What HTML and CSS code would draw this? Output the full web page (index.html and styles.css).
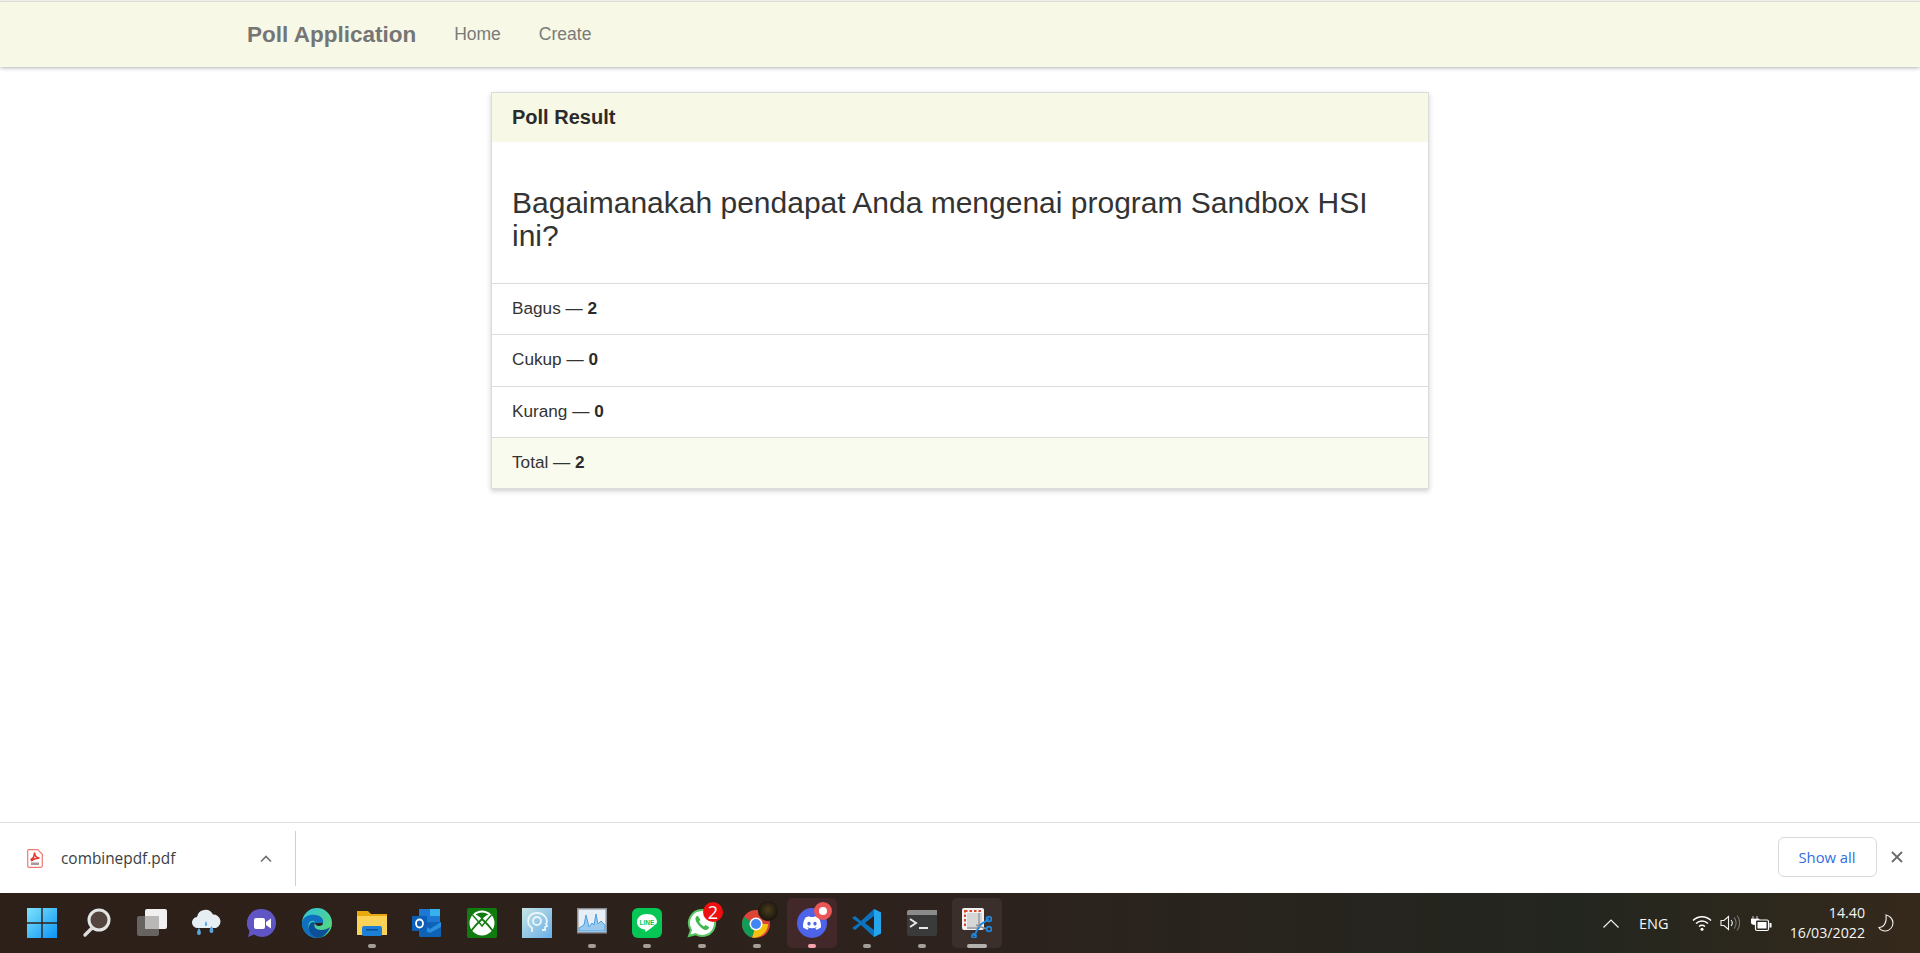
FILE: index.html
```html
<!DOCTYPE html>
<html lang="en">
<head>
  <meta charset="UTF-8" />
  <meta name="viewport" content="width=device-width, initial-scale=1.0"/>
  <title>Poll Application</title>
  <link rel="stylesheet" href="styles.css">
</head>

<body>
  <div class="page">
    <!-- Navbar -->
    <nav class="navbar">
      <a href="#" class="brand">Poll Application</a>
      <a href="#" class="nav-link">Home</a>
      <a href="#" class="nav-link">Create</a>
    </nav>

    <!-- Poll result -->
    <main class="main-content">
      <div class="card">
        <div class="card-header">Poll Result</div>
        <div class="card-body">
          <h2>Bagaimanakah pendapat Anda mengenai program Sandbox HSI ini?</h2>
        </div>
        <ul class="result-list">
          <li>Bagus — <b>2</b></li>
          <li>Cukup — <b>0</b></li>
          <li>Kurang — <b>0</b></li>
          <li class="total">Total — <b>2</b></li>
        </ul>
      </div>
    </main>
  </div>

  <!-- Chrome download shelf -->
  <div class="download-bar">
    <div class="download-item">
      <svg class="pdf-icon" viewBox="0 0 16 19" width="16" height="19">
        <path d="M.7 1.700a1 1 0 0 1 1-1h9l4.600 4.600v11.500a1.500 1.500 0 0 1-1.500 1.500H1.700a1 1 0 0 1-1-1z" fill="#fff" stroke="#f07a72" stroke-width="1.200"/>
        <path d="M3.500 10.500c2-.5 4-3 4-7 .3 3 2 5.500 5 5.500-3 0-6 1-8.500 3" fill="none" stroke="#e5352b" stroke-width="1.600"/>
        <rect x="4" y="13.500" width="8" height="2.500" fill="#a39797"/>
      </svg>
      <span class="file-name">combinepdf.pdf</span>
      <svg class="chevron" viewBox="0 0 12 8" width="12" height="8"><path d="M1 6.500 6 1.500l5 5" fill="none" stroke="#6f6f6f" stroke-width="1.600"/></svg>
    </div>
    <div class="download-actions">
      <button class="show-all">Show all</button>
      <svg class="close-icon" viewBox="0 0 12 12" width="12" height="12"><path d="M1 1l10 10M11 1 1 11" stroke="#6b6b6b" stroke-width="1.800"/></svg>
    </div>
  </div>

  <!-- Windows taskbar -->
  <footer class="taskbar">
    <div class="task-icons">
      <div class="task-item">
        <svg viewBox="0 0 30 30">
          <defs>
            <linearGradient id="winGrad" x1="0" y1="0" x2="1" y2="1"><stop offset="0" stop-color="#7fe3fb"/><stop offset="1" stop-color="#0a94f5"/></linearGradient>
          </defs>
          <path d="M0 0h14.300v14.300H0zM15.700 0H30v14.300H15.700zM0 15.700h14.300V30H0zM15.700 15.700H30V30H15.700z" fill="url(#winGrad)"/>
        </svg>
      </div>
      <div class="task-item">
        <svg viewBox="0 0 30 30">
          <circle cx="17" cy="12" r="10" fill="#54453f" stroke="#e4e4e4" stroke-width="3"/>
          <path d="M10 20 3 27" stroke="#dcdcdc" stroke-width="3.400" stroke-linecap="round"/>
        </svg>
      </div>
      <div class="task-item">
        <svg viewBox="0 0 30 30">
          <rect x="8" y="1" width="22" height="20" rx="2" fill="#f0f0f0"/>
          <rect x="0" y="8" width="22" height="20" rx="2" fill="#6d6a68" fill-opacity=".9"/>
          <rect x="8" y="8" width="14" height="13" fill="#b9b8b7"/>
        </svg>
      </div>
      <div class="task-item">
        <svg viewBox="0 0 30 30">
          <path d="M6 20a5.500 5.500 0 0 1-1-11 8.500 8.500 0 0 1 16-2.500 7 7 0 0 1 3 13.500z" fill="#e6edf3"/>
          <path d="M7 20c-2.500 3.500-2.500 7 0 7s2.500-3.500 0-7zM19.500 18c-2.500 3.500-2.500 7 0 7s2.500-3.500 0-7zM14 13c-1.500 2.500-1.500 5 0 5s1.500-2.500 0-5z" fill="#5ba7e0"/>
        </svg>
      </div>
      <div class="task-item">
        <svg viewBox="0 0 30 30">
          <path d="M15 1a14 14 0 1 1-8 25.500L1 29l1.500-6A14 14 0 0 1 15 1z" fill="#5f55c4"/>
          <rect x="7" y="10" width="11" height="11" rx="2" fill="#fff"/>
          <path d="M19 14l5-3.500v10L19 17z" fill="#fff"/>
        </svg>
      </div>
      <div class="task-item">
        <svg viewBox="0 0 30 30">
          <defs>
            <linearGradient id="edgeGrad" x1="0" y1="0" x2="1" y2="1"><stop offset="0" stop-color="#2fc3e0"/><stop offset="1" stop-color="#5edb6a"/></linearGradient>
          </defs>
          <circle cx="15" cy="15" r="15" fill="url(#edgeGrad)"/>
          <path d="M0 15C1 8 8 6 14 7c6 1 8 5 7 8h-8c0-3-4-3-6 0-2 4 1 11 8 15C6 30 0 23 0 15z" fill="#0f6fc0"/>
          <path d="M13 15c-2 4 1 7 6 7 3 0 7-1 9-3-2 6-7 11-13 11-6-2-9-8-8-12 1-4 5-5 6-3z" fill="#0c4f98"/>
          <path d="M13 15h8c0 2-2 3-4 3s-4-1-4-3z" fill="#2d2019"/>
        </svg>
      </div>
      <div class="task-item running">
        <svg viewBox="0 0 30 30">
          <path d="M0 3h11l3 3h16v21H0z" fill="#e8a90f"/>
          <path d="M0 8h30v19H0z" fill="#fbd258"/>
          <rect x="5" y="18" width="20" height="10" rx="2" fill="#1b80d6"/>
          <rect x="9" y="21" width="12" height="1.500" fill="#0c4e8f"/>
        </svg>
      </div>
      <div class="task-item">
        <svg viewBox="0 0 30 30">
          <path d="M7 1h21v13H7z" fill="#1d78d4"/>
          <path d="M18 1h10v7H18z" fill="#37b0ee"/>
          <path d="M7 14h22v14a1 1 0 0 1-1 1H8a1 1 0 0 1-1-1z" fill="#0f62b4"/>
          <path d="M7 14l11 7 11-7v5l-11 6-11-5z" fill="#2a8fe0"/>
          <rect x="0" y="8" width="15" height="15" rx="1" fill="#0a5fb8"/>
          <ellipse cx="7.500" cy="15.500" rx="3.500" ry="4" fill="none" stroke="#fff" stroke-width="1.800"/>
        </svg>
      </div>
      <div class="task-item">
        <svg viewBox="0 0 30 30">
          <rect width="30" height="30" rx="2" fill="#107c10"/>
          <circle cx="15" cy="15" r="12.500" fill="#fff"/>
          <path d="M15 11.500C13 9 11 7.500 8.500 6.500a12 12 0 0 1 13 0C19 7.500 17 9 15 11.500z" fill="#107c10"/>
          <path d="M5.500 7c3 3.500 6 6.500 9.500 11 3.500-4.500 6.500-7.500 9.500-11" fill="none" stroke="#107c10" stroke-width="1.400"/>
          <path d="M4 23c3-4 6-7.500 11-12 5 4.500 8 8 11 12" fill="none" stroke="#107c10" stroke-width="1.800"/>
        </svg>
      </div>
      <div class="task-item">
        <svg viewBox="0 0 30 30">
          <defs>
            <linearGradient id="headGrad" x1="0" y1="0" x2="1" y2="1"><stop offset="0" stop-color="#c5e5e4"/><stop offset="1" stop-color="#69aee8"/></linearGradient>
          </defs>
          <rect width="30" height="30" fill="url(#headGrad)"/>
          <path d="M10 24v-4c-7-5-4-15 5-15s11 8 9 11l1 2-2 1v3h-3" fill="none" stroke="#eaf6fb" stroke-width="1.800"/>
          <circle cx="15" cy="13" r="4" fill="none" stroke="#eaf6fb" stroke-width="1.800"/>
        </svg>
      </div>
      <div class="task-item running">
        <svg viewBox="0 0 30 30">
          <rect x=".75" y=".75" width="28.500" height="24" fill="#e8eef6" stroke="#8b8f96" stroke-width="1.500"/>
          <path d="M2 20l5-3 2-10 3 12 3-4 2 2 2-11 2 10 3-3 4 4v6H2z" fill="#9cc9ee" stroke="#4ba0e2"/>
        </svg>
      </div>
      <div class="task-item running">
        <svg viewBox="0 0 30 30">
          <rect width="30" height="30" rx="6" fill="#06c755"/>
          <path d="M15 6c-6 0-10 3.500-10 8 0 4 3 7 8 7.500.6.200 0 2 .3 2.300.5.300 6-3.500 8-5.500 2-1.800 3.700-2.500 3.700-4.300 0-4.500-4-8-10-8z" fill="#fff"/>
          <text x="15" y="16.500" text-anchor="middle" class="line-text">LINE</text>
        </svg>
      </div>
      <div class="task-item running">
        <svg viewBox="0 0 30 30">
          <path d="M15 2a13 13 0 0 0-11 20L2 28l6.500-1.800A13 13 0 1 0 15 2z" fill="#fff" stroke="#58c763" stroke-width="2"/>
          <path d="M10 8c-2 1-2 4 0 7s5 6 8 7c2 .500 4-1 4-3l-3.500-2-1.500 1.500c-2-1-4-3-5-5l1.500-1.500L11 8z" fill="#3fb94e"/>
        </svg>
        <span class="badge badge-count">2</span>
      </div>
      <div class="task-item running">
        <svg viewBox="0 0 30 30">
          <circle cx="14" cy="16" r="14" fill="#db4437"/>
          <path d="M14 16 26 16A14 14 0 0 1 10 29.500z" fill="#f4c20d"/>
          <path d="M14 16 10 29.500A14 14 0 0 1 2 9z" fill="#0f9d58"/>
          <circle cx="14" cy="16" r="6.500" fill="#fff"/>
          <circle cx="14" cy="16" r="5" fill="#4285f4"/>
        </svg>
        <span class="badge badge-avatar"></span>
      </div>
      <div class="task-item running active-alert">
        <svg viewBox="0 0 30 30">
          <circle cx="15" cy="15" r="15" fill="#4d63e8"/>
          <g transform="translate(6 6) scale(.75)">
            <path d="M20.317 4.37a19.791 19.791 0 0 0-4.885-1.515.074.074 0 0 0-.079.037c-.21.375-.444.864-.608 1.250a18.270 18.270 0 0 0-5.487 0 12.640 12.640 0 0 0-.617-1.250.077.077 0 0 0-.079-.037A19.736 19.736 0 0 0 3.677 4.370a.07.07 0 0 0-.032.027C.533 9.046-.32 13.580.099 18.057a.082.082 0 0 0 .031.057 19.900 19.900 0 0 0 5.993 3.030.078.078 0 0 0 .084-.028 14.090 14.090 0 0 0 1.226-1.994.076.076 0 0 0-.041-.106 13.107 13.107 0 0 1-1.872-.892.077.077 0 0 1-.008-.128 10.200 10.200 0 0 0 .372-.292.074.074 0 0 1 .077-.01c3.928 1.793 8.180 1.793 12.062 0a.074.074 0 0 1 .078.01c.12.098.246.198.373.292a.077.077 0 0 1-.006.127 12.299 12.299 0 0 1-1.873.892.077.077 0 0 0-.041.107c.36.698.772 1.362 1.225 1.993a.076.076 0 0 0 .084.028 19.839 19.839 0 0 0 6.002-3.030.077.077 0 0 0 .032-.054c.5-5.177-.838-9.674-3.549-13.660a.061.061 0 0 0-.031-.03zM8.020 15.330c-1.183 0-2.157-1.085-2.157-2.419 0-1.333.956-2.419 2.157-2.419 1.210 0 2.176 1.095 2.157 2.420 0 1.333-.956 2.418-2.157 2.418zm7.975 0c-1.183 0-2.157-1.085-2.157-2.419 0-1.333.955-2.419 2.157-2.419 1.210 0 2.176 1.095 2.157 2.420 0 1.333-.946 2.418-2.157 2.418z" fill="#fff"/>
          </g>
        </svg>
        <span class="badge badge-alert"></span>
      </div>
      <div class="task-item running">
        <svg viewBox="0 0 30 30">
          <path d="M22 1 29 4.500v21L22 29 9 17l-6 5-3-2 7-5-7-5 3-2 6 5z" fill="#0c72bd"/>
          <path d="M22 1 29 4.500v21L22 29z" fill="#24a5ee"/>
          <path d="M22 8v14l-9-7z" fill="#2d2019"/>
        </svg>
      </div>
      <div class="task-item running">
        <svg viewBox="0 0 30 30">
          <rect y="2" width="30" height="26" rx="2" fill="#3a3a3a"/>
          <path d="M0 4a2 2 0 0 1 2-2h28v5H0z" fill="#8b8b8b"/>
          <path d="M3 11l6 4-6 4" fill="none" stroke="#e8e8e8" stroke-width="2"/>
          <rect x="12" y="19" width="9" height="2" fill="#e8e8e8"/>
        </svg>
      </div>
      <div class="task-item task-active">
        <svg viewBox="0 0 30 30">
          <rect width="22" height="22" rx="2" fill="#f1f1f1"/>
          <rect x="3" y="3" width="15" height="15" fill="none" stroke="#d8492e" stroke-width="2" stroke-dasharray="2.500 2"/>
          <rect x="5" y="5" width="15" height="15" fill="#d6d6d6"/>
          <path d="M17 5v15H5" fill="none" stroke="#a9a9a9" stroke-width="2"/>
          <path d="M12 28l6-11 9-6" fill="none" stroke="#1f86dd" stroke-width="1.800"/>
          <path d="M14 17l5 2 6 2" fill="none" stroke="#8a8f94" stroke-width="1.500"/>
          <circle cx="27" cy="11" r="2.400" fill="none" stroke="#1f86dd" stroke-width="1.800"/>
          <circle cx="27" cy="21" r="2.400" fill="none" stroke="#1f86dd" stroke-width="1.800"/>
          <circle cx="12" cy="28" r="2" fill="none" stroke="#1f86dd" stroke-width="1.800"/>
        </svg>
      </div>
    </div>

    <div class="tray">
      <svg class="tray-chevron" viewBox="0 0 16 9" width="16" height="9"><path d="M.5 8.500 8 1l7.500 7.500" fill="none" stroke="#f2f2f2" stroke-width="1.200"/></svg>
      <span class="tray-lang">ENG</span>
      <svg class="tray-wifi" viewBox="0 0 20 16" width="20" height="16">
        <path d="M1 5.500c5-5 13-5 18 0M4 8.500c3.500-3.200 8.500-3.200 12 0M7 11.500c1.800-1.500 4.200-1.500 6 0" fill="none" stroke="#fff" stroke-width="1.500"/>
        <circle cx="10" cy="14.300" r="1.500" fill="#fff"/>
      </svg>
      <svg class="tray-sound" viewBox="0 0 20 18" width="20" height="18">
        <path d="M1 6.500h3l4.500-4v13L4 11.500H1z" fill="none" stroke="#f2f2f2" stroke-width="1.100"/>
        <path d="M11 6c1.500 1.700 1.500 4.300 0 6" fill="none" stroke="#f2f2f2" stroke-width="1.100"/>
        <path d="M14 3.500c2.800 3 2.800 8 0 11M17 1.500c3.500 4 3.500 11 0 15" fill="none" stroke="#77756f" stroke-width="1.100"/>
      </svg>
      <svg class="tray-battery" viewBox="0 0 21 17" width="21" height="17">
        <path d="M2 1v3M6 1v3M0 4h8v2.500a3 3 0 0 1-3 3H3a3 3 0 0 1-3-3z" fill="#fff" stroke="#fff" stroke-width=".8"/>
        <rect x="4.500" y="5" width="13" height="10.500" rx="1.500" fill="#2a2620" stroke="#fff" stroke-width="1.200"/>
        <rect x="6.500" y="7" width="9" height="6.500" fill="#fff"/>
        <rect x="18.500" y="8" width="2" height="4.500" fill="#fff"/>
      </svg>
      <div class="clock">
        <span>14.40</span>
        <span>16/03/2022</span>
      </div>
      <svg class="tray-moon" viewBox="0 0 16 18" width="16" height="18"><path d="M8 1c3 .5 7 3.500 7 8 0 4-3.500 8-7.500 8-3 0-5.500-1.500-6.500-3.500 4 .5 8-4 7-12.500z" fill="none" stroke="#f2f2f2" stroke-width="1.100"/></svg>
    </div>
  </footer>
</body>
</html>
```

FILE: styles.css
```css
* {
  margin: 0;
  padding: 0;
  box-sizing: border-box;
}

html, body {
  height: 100%;
  overflow: hidden;
}

body {
  font-family: 'Liberation Sans', Arial, sans-serif;
  background-color: #fff;
  color: #333;
  display: flex;
  flex-direction: column;
}

.page {
  flex: 1;
  min-height: 0;
}

/* Navbar */

.navbar {
  display: flex;
  align-items: center;
  height: 66px;
  margin-top: 1px;
  padding-left: 247px;
  background-color: #f7f8e5;
  border-top: 1px solid #dcdcd0;
  box-shadow: 0 1px 4px rgba(0, 0, 0, 0.3);
}

.brand {
  font-size: 22.5px;
  font-weight: bold;
  color: #757575;
  text-decoration: none;
  margin-right: 38px;
}

.nav-link {
  font-size: 17.5px;
  color: #7a7a7a;
  text-decoration: none;
  margin-right: 38px;
}

/* Card */

.main-content {
  width: 938px;
  margin: 25px 0 0 491px;
}

.card {
  background-color: #fff;
  border: 1px solid #dcdcdc;
  box-shadow: 0 2px 5px rgba(0, 0, 0, 0.2);
}

.card-header {
  height: 49px;
  line-height: 49px;
  padding-left: 20px;
  font-size: 20px;
  font-weight: bold;
  color: #2b2b2b;
  background-color: #f7f8e5;
}

.card-body {
  height: 141px;
  padding: 44px 20px 0;
}

.card-body h2 {
  font-size: 30px;
  font-weight: normal;
  line-height: 33px;
  color: #333;
}

.result-list {
  list-style: none;
}

.result-list li {
  height: 51.250px;
  line-height: 49px;
  padding-left: 20px;
  font-size: 17.200px;
  border-top: 1px solid #dcdcdc;
}

.result-list b {
  color: #2b2b2b;
}

.result-list .total {
  background-color: #fafbef;
}

/* Download shelf */

.download-bar {
  display: flex;
  justify-content: space-between;
  flex-shrink: 0;
  height: 71px;
  background-color: #fff;
  border-top: 1px solid #e2e2e2;
  font-family: 'Open Sans', sans-serif;
}

.download-item {
  display: flex;
  align-items: center;
  width: 296px;
  height: 55px;
  margin-top: 8px;
  padding-left: 27px;
  border-right: 1px solid #cfcfcf;
}

.pdf-icon {
  margin-right: 18px;
}

.file-name {
  font-size: 15.400px;
  color: #3c4043;
  width: 199px;
}

.download-actions {
  display: flex;
  align-items: center;
  height: 40px;
  margin-top: 14px;
}

.show-all {
  width: 99px;
  height: 40px;
  font-family: 'Open Sans', sans-serif;
  font-size: 14.800px;
  color: #2f6fe0;
  background-color: #fff;
  border: 1px solid #d9d9d9;
  border-radius: 6px;
}

.close-icon {
  margin: 0 17px 0 14.500px;
}

/* Taskbar */

.taskbar {
  display: flex;
  justify-content: space-between;
  flex-shrink: 0;
  height: 60px;
  background: linear-gradient(90deg, #2d2019 0%, #2d221d 50%, #23261f 82%, #35291b 100%);
  font-family: 'Open Sans', sans-serif;
  color: #f5f5f5;
}

.task-icons {
  display: flex;
  padding-left: 14px;
}

.task-item {
  position: relative;
  display: flex;
  align-items: center;
  justify-content: center;
  width: 55px;
  height: 60px;
}

.task-item svg {
  width: 30px;
  height: 30px;
}

.running::after,
.task-active::after {
  content: "";
  position: absolute;
  bottom: 5px;
  left: 23.500px;
  width: 8px;
  height: 4px;
  border-radius: 2px;
  background-color: #a39e9a;
}

.active-alert::before,
.task-active::before {
  content: "";
  position: absolute;
  top: 5px;
  left: 2.500px;
  width: 50px;
  height: 50px;
  border-radius: 5px;
  background-color: #43282a;
}

.task-item svg,
.badge {
  z-index: 1;
}

.active-alert::after {
  background-color: #f5a3ad;
}

.task-active::before {
  background-color: #3a2f2a;
}

.task-active::after {
  left: 17.500px;
  width: 20px;
  background-color: #b5b1ae;
}

.badge {
  position: absolute;
  border-radius: 50%;
}

.badge-count {
  top: 9px;
  left: 29px;
  width: 20px;
  height: 20px;
  background-color: #f00f0f;
  color: #fff;
  font-size: 18px;
  line-height: 20px;
  text-align: center;
}

.badge-avatar {
  top: 8px;
  left: 29px;
  width: 20px;
  height: 20px;
  background: radial-gradient(circle at 50% 45%, #4a3c1c, #17130d 75%);
}

.badge-alert {
  top: 9px;
  left: 30px;
  width: 18px;
  height: 18px;
  background-color: #fff;
  border: 5px solid #ea5656;
}

.line-text {
  font-family: 'Liberation Sans', sans-serif;
  font-size: 6.500px;
  font-weight: bold;
  fill: #06c755;
}

/* Tray */

.tray {
  display: flex;
  align-items: center;
  padding-right: 26px;
}

.tray-lang {
  font-size: 14.500px;
  margin: 0 23.500px 0 19.500px;
}

.tray-sound {
  margin: 0 10.500px 0 8px;
}

.clock {
  display: flex;
  flex-direction: column;
  align-items: flex-end;
  width: 84px;
  margin: 0 13px 0 9.500px;
  font-size: 14.200px;
  line-height: 20px;
}
```
